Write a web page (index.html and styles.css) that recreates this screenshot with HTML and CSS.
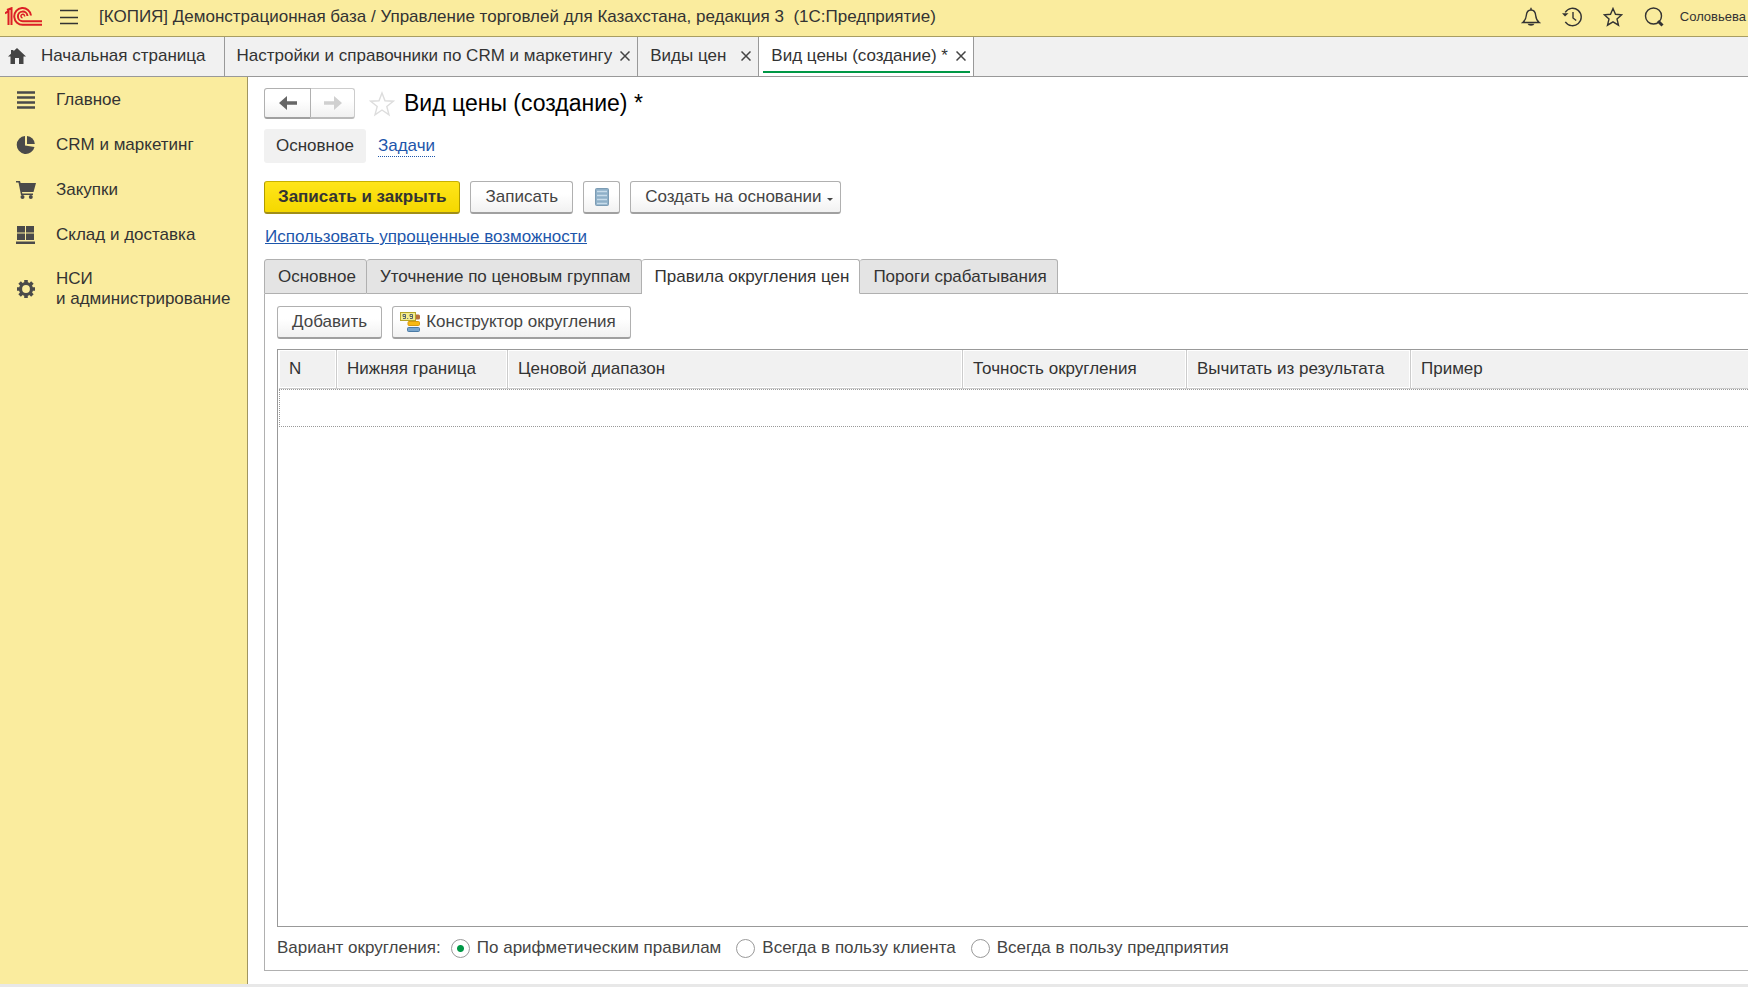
FILE: index.html
```html
<!DOCTYPE html>
<html lang="ru">
<head>
	<meta charset="UTF-8">
	<title>Вид цены (создание) *</title>
	<link rel="stylesheet" href="styles.css">
</head>
<body>
	<header class="top">
		<svg class="logo" width="38" height="20" viewBox="0 0 38 20" fill="none" stroke="#dc1f26" stroke-width="2">
			<path d="M0 6.500L3.500 4V18M2 3L6.500 1.200V18"/>
			<path d="M26 8.500A8.400 8.400 0 1 0 18 17.800H37"/>
			<path d="M22.500 9A4.800 4.800 0 1 0 18 14.200H37"/>
			<path d="M19.500 9.500A1.800 1.800 0 1 0 17.500 10.800" stroke-width="1.500"/>
		</svg>
		<button class="icon menu" aria-label="Меню">
			<svg width="18" height="16" viewBox="0 0 18 16" stroke="#333" stroke-width="1.300"><path d="M0 1.500H18M0 8.500H18M0 14.500H18"/></svg>
		</button>
		<span class="caption">[КОПИЯ] Демонстрационная база / Управление торговлей для Казахстана, редакция 3&nbsp; (1С:Предприятие)</span>
		<div class="tools">
			<button class="icon" aria-label="Уведомления">
				<svg width="20" height="20" viewBox="0 0 20 20" fill="none" stroke="#333" stroke-width="1.400"><path d="M1.800 15.500C4.500 13.500 5 11.500 5.300 8.500C5.600 4.800 7.200 3 10 3S14.400 4.800 14.700 8.500C15 11.500 15.500 13.500 18.200 15.500Z"/><path d="M10 3V.8"/><path d="M6.500 16.800A3.600 2.600 0 0 0 13.500 16.800Z" fill="#333" stroke="none"/></svg>
			</button>
			<button class="icon" aria-label="История">
				<svg width="20" height="20" viewBox="0 0 20 20" fill="none" stroke="#333" stroke-width="1.400"><path d="M3.200 5.300A8.700 8.700 0 1 1 3.300 14.800"/><path d="M11 5V11L14.200 13.500"/><path d="M0 6.200H6.500L3 9.500Z" fill="#333" stroke="none"/></svg>
			</button>
			<button class="icon" aria-label="Избранное">
				<svg width="20" height="20" viewBox="0 0 20 20" fill="none" stroke="#333" stroke-width="1.400"><path d="M10 1.500L12.500 7.300L18.700 7.800L14 11.900L15.500 18.200L10 14.900L4.500 18.200L6 11.900L1.300 7.800L7.500 7.300Z"/></svg>
			</button>
			<button class="icon" aria-label="Поиск">
				<svg width="20" height="20" viewBox="0 0 20 20" fill="none" stroke="#333"><circle cx="9.500" cy="9" r="8" stroke-width="1.400"/><path d="M14 14L18.500 18.500" stroke-width="3"/></svg>
			</button>
			<a class="user" href="#">Соловьева</a>
		</div>
	</header>

	<nav class="windows">
		<a class="win home" href="#">
			<svg width="18" height="16" viewBox="0 0 18 16" fill="#444"><path d="M9 0L18 8.500H15.500V16H11V10H7V16H2.500V8.500H0L3 5.700V2H5.500V3.300Z"/></svg>
			Начальная страница
		</a>
		<div class="win"><a href="#">Настройки и справочники по CRM и маркетингу</a><button class="close" aria-label="Закрыть"><svg width="10" height="10" viewBox="0 0 10 10"><path d="M.5 .5L9.500 9.500M9.500 .5L.5 9.500"/></svg></button></div>
		<div class="win wide"><a href="#">Виды цен</a><button class="close" aria-label="Закрыть"><svg width="10" height="10" viewBox="0 0 10 10"><path d="M.5 .5L9.500 9.500M9.500 .5L.5 9.500"/></svg></button></div>
		<div class="win on"><a href="#">Вид цены (создание) *</a><button class="close" aria-label="Закрыть"><svg width="10" height="10" viewBox="0 0 10 10"><path d="M.5 .5L9.500 9.500M9.500 .5L.5 9.500"/></svg></button></div>
	</nav>

	<div class="page">
		<nav class="side">
			<a href="#">
				<svg width="20" height="18" viewBox="0 0 20 18" stroke="#4a4a4a" stroke-width="2.500"><path d="M1 1.500H19M1 6.500H19M1 11.500H19M1 16.500H19"/></svg>
				Главное
			</a>
			<a href="#">
				<svg width="20" height="18" viewBox="0 0 20 18" fill="#4a4a4a"><path d="M9 0V9.500L18.500 11A9 9 0 1 1 9 0Z"/><path d="M11 0A8.500 8.500 0 0 1 18.800 8H11Z"/></svg>
				CRM и маркетинг
			</a>
			<a href="#">
				<svg width="20" height="18" viewBox="0 0 20 18" fill="#4a4a4a"><path d="M0 0H4L4.600 2H20L17.500 11H6L6.300 12.500H17V14H5L2.500 1.500H0Z"/><circle cx="6.500" cy="16" r="2"/><circle cx="14.800" cy="16" r="2"/></svg>
				Закупки
			</a>
			<a href="#">
				<svg width="20" height="18" viewBox="0 0 20 18" fill="#4a4a4a"><path d="M1 0H9V6.500H1ZM10 0H18V6.500H10ZM1 7.500H9V14H1ZM10 7.500H18V14H10ZM0 15.500H19V18H0Z"/></svg>
				Склад и доставка
			</a>
			<a href="#">
				<svg width="20" height="18" viewBox="0 0 20 18" fill="none" stroke="#4a4a4a"><circle cx="10" cy="9" r="5.500" stroke-width="3.200"/><path d="M10 0V3M10 15V18M1 9H4M16 9H19M3.600 2.600L5.800 4.800M14.200 13.200L16.400 15.400M3.600 15.400L5.800 13.200M14.200 4.800L16.400 2.600" stroke-width="3.600"/></svg>
				<span>НСИ<br>и администрирование</span>
			</a>
		</nav>

		<main class="form">
			<div class="head">
				<div class="history">
					<button class="btn" aria-label="Назад"><svg width="18" height="14" viewBox="0 0 18 14" fill="#666"><path d="M0 7L8 0V5.300H18V8.700H8V14Z"/></svg></button>
					<button class="btn" aria-label="Вперед" disabled><svg width="18" height="14" viewBox="0 0 18 14" fill="#d0d0d0"><path d="M18 7L10 0V5.300H0V8.700H10V14Z"/></svg></button>
				</div>
				<svg class="fav" width="26" height="26" viewBox="0 0 26 26" fill="none" stroke="#ddd" stroke-width="1.400"><path d="M13 2L16 9.800L24.300 10.200L17.800 15.400L20 23.800L13 19L6 23.800L8.200 15.400L1.700 10.200L10 9.800Z"/></svg>
				<h1>Вид цены (создание) *</h1>
			</div>

			<nav class="sections">
				<a class="on" href="#">Основное</a>
				<a class="task" href="#">Задачи</a>
			</nav>

			<div class="bar">
				<button class="btn main">Записать и закрыть</button>
				<button class="btn">Записать</button>
				<button class="btn list" aria-label="Список">
					<svg width="14" height="18" viewBox="0 0 14 18"><rect x=".5" y=".5" width="13" height="17" rx="1" fill="#8fb0c8" stroke="#7c9cb4"/><path d="M2 3.500H12M2 7.500H12M2 11.500H12M2 15.500H12" stroke="#c8dcea" stroke-width="1.500"/></svg>
				</button>
				<button class="btn drop">Создать на основании<i class="arrow"></i></button>
			</div>

			<a class="simple" href="#">Использовать упрощенные возможности</a>

			<div class="tabs">
				<button>Основное</button>
				<button>Уточнение по ценовым группам</button>
				<button class="on">Правила округления цен</button>
				<button>Пороги срабатывания</button>
			</div>

			<section class="panel">
				<div class="bar">
					<button class="btn">Добавить</button>
					<button class="btn builder">
						<svg width="20" height="20" viewBox="0 0 20 20">
							<rect x="12" y="2.500" width="8" height="5" rx="1.500" fill="#b8703c"/>
							<rect x="8" y="9.500" width="11.500" height="4" rx="1" fill="#f8b912" stroke="#d99a0c"/>
							<rect x="7.500" y="15.500" width="12" height="4" rx="1" fill="#78a5cc" stroke="#4b7ba6"/>
							<rect x=".5" y=".5" width="15" height="8" fill="#f5ec8c" stroke="#b5a52a"/>
							<path d="M5.500 4.500H3V2.500H5.500V6.500H3M12.500 4.500H10V2.500H12.500V6.500H10M7.200 6.500H8.200" fill="none" stroke="#55636e"/>
						</svg>
						Конструктор округления
					</button>
				</div>

				<div class="grid">
					<table>
						<thead>
							<tr>
								<th class="c-num">N</th>
								<th class="c-low">Нижняя граница</th>
								<th class="c-range">Ценовой диапазон</th>
								<th class="c-calc">Точность округления</th>
								<th class="c-calc">Вычитать из результата</th>
								<th>Пример</th>
							</tr>
						</thead>
						<tbody>
							<tr><td colspan="6"></td></tr>
						</tbody>
					</table>
				</div>

				<div class="round" role="radiogroup" aria-labelledby="round">
					<span id="round">Вариант округления:</span>
					<label><input type="radio" name="round" checked>По арифметическим правилам</label>
					<label><input type="radio" name="round">Всегда в пользу клиента</label>
					<label><input type="radio" name="round">Всегда в пользу предприятия</label>
				</div>
			</section>
		</main>
	</div>
</body>
</html>
```

FILE: styles.css
```css
* {
	margin: 0;
	padding: 0;
	box-sizing: border-box;
}
body {
	display: flex;
	flex-direction: column;
	min-height: 100vh;
	border-bottom: 3px solid #e8e8e8;
	font: 17px/20px "Liberation Sans", Arial, sans-serif;
	color: #333;
	background: #fff;
	overflow-x: hidden;
}
button {
	font: inherit;
	color: inherit;
	border: none;
	background: none;
	cursor: pointer;
}
a {
	color: inherit;
	text-decoration: none;
}
svg {
	display: block;
	flex: none;
}

/* шапка */
.top {
	display: flex;
	align-items: center;
	height: 37px;
	padding: 0 2px 3px 5px;
	border-bottom: 1px solid #a89d62;
	background: #faec9e;
	white-space: nowrap;
}
.menu {
	margin: 0 21px 0 17px;
}
.tools {
	display: flex;
	align-items: center;
	gap: 21px;
	margin-left: auto;
}
.user {
	margin-left: -5px;
	font-size: 13px;
}

/* открытые окна */
.windows {
	display: flex;
	height: 40px;
	border-bottom: 1px solid #999;
	background: #f1f1f1;
	white-space: nowrap;
}
.win {
	display: flex;
	align-items: center;
	gap: 8px;
	padding: 0 7px 2px 12px;
	border-right: 1px solid #999;
}
.home {
	gap: 15px;
	padding: 0 18px 2px 8px;
}
.wide {
	gap: 15px;
}
.win.on {
	position: relative;
	background: #fff;
}
.win.on::after {
	content: "";
	position: absolute;
	left: 4px;
	right: 3px;
	bottom: 3px;
	height: 2px;
	background: #009846;
}
.close path {
	stroke: #444;
	stroke-width: 1.5;
}

.page {
	flex: 1;
	display: flex;
}
.side {
	flex: none;
	width: 248px;
	padding-top: 10px;
	border-right: 1px solid #a09560;
	background: #faec9e;
}
.side a {
	display: flex;
	align-items: center;
	gap: 20px;
	min-height: 25px;
	margin-bottom: 20px;
	padding-left: 16px;
}
.side span {
	padding: 2px 0;
}

/* форма */
.form {
	flex: 1;
	display: flex;
	flex-direction: column;
	min-width: 0;
	padding: 11px 0 13px 16px;
}
.head {
	display: flex;
	align-items: center;
	height: 31px;
}
.head h1 {
	padding-bottom: 2px;
	font-size: 23px;
	line-height: 26px;
	font-weight: normal;
	color: #000;
}
.fav {
	margin: 0 9px 0 14px;
}
.history {
	display: flex;
}
.history .btn {
	width: 47px;
	height: 31px;
	padding: 0;
}
.history .btn:first-child {
	border-radius: 3px 0 0 3px;
}
.history .btn:last-child {
	width: 44px;
	border-color: #ccc #ccc #bbb;
	border-left: none;
	border-radius: 0 3px 3px 0;
}
.btn {
	display: flex;
	align-items: center;
	justify-content: center;
	height: 33px;
	padding: 0 14px;
	border: 1px solid #b0b0b0;
	border-bottom: 2px solid #a0a0a0;
	border-radius: 3px;
	color: #444;
	background: linear-gradient(#fff 40%, #f1f1f1);
	white-space: nowrap;
}
.btn.main {
	padding: 0 13px;
	border-color: #c8b100 #b09c00 #a08e18;
	font-weight: bold;
	color: #333;
	background: linear-gradient(#ffe51a, #f5d800);
}
.btn.list {
	width: 37px;
	padding: 0;
}
.btn.drop {
	padding-right: 7px;
}
.arrow {
	margin: 4px 0 0 5px;
	border: 3px solid transparent;
	border-top-color: #444;
	border-bottom: none;
}
.sections {
	display: flex;
	align-items: center;
	gap: 12px;
	margin: 10px 0 18px;
}
.sections .on {
	padding: 7px 12px;
	border-radius: 3px;
	background: #f1f1f1;
}
.task {
	border-bottom: 1px dotted #1d56ab;
	color: #1d56ab;
}
.bar {
	display: flex;
	gap: 10px;
}
.simple {
	align-self: flex-start;
	margin: 13px 0 12px 1px;
	color: #1d56ab;
	text-decoration: underline;
}

/* вкладки */
.tabs {
	display: flex;
}
.tabs button {
	height: 35px;
	padding: 0 10px 0 13px;
	border: 1px solid #b0b0b0;
	border-left: none;
	border-radius: 3px 3px 0 0;
	background: #e4e4e4;
	white-space: nowrap;
}
.tabs button:first-child {
	border-left: 1px solid #b0b0b0;
}
.tabs .on {
	border-bottom-color: #fff;
	background: #fff;
}
.tabs::after {
	content: "";
	flex: 1;
	border-bottom: 1px solid #b0b0b0;
}
.panel {
	flex: 1;
	display: flex;
	flex-direction: column;
	padding: 12px 0 12px 12px;
	border-left: 1px solid #b0b0b0;
	border-bottom: 1px solid #b0b0b0;
}
.btn.builder {
	gap: 6px;
	padding-left: 7px;
}
.grid {
	flex: 1;
	margin: 10px 0 11px;
	padding-left: 1px;
	border: 1px solid #999;
	border-right: none;
}
.grid table {
	width: 100%;
	table-layout: fixed;
	border-collapse: separate;
	border-spacing: 0;
}
.grid th {
	height: 39px;
	padding: 0 10px;
	border-right: 1px solid #ccc;
	border-bottom: 1px solid #ccc;
	box-shadow: inset 0 0 0 1px #fff;
	font-weight: normal;
	text-align: left;
	white-space: nowrap;
	background: #f1f1f1;
}
.grid th:last-child {
	border-right: none;
	box-shadow: inset 1px 1px 0 #fff;
}
.c-num {
	width: 58px;
}
.c-low {
	width: 171px;
}
.c-range {
	width: 455px;
}
.c-calc {
	width: 224px;
}
.grid td {
	height: 38px;
	border: 1px dotted #999;
	border-right: none;
}
.round {
	display: flex;
	align-items: center;
	gap: 15px;
	height: 20px;
	color: #444;
}
.round span {
	margin-right: -5px;
}
.round label {
	display: flex;
	align-items: center;
	gap: 7px;
}
.round input {
	appearance: none;
	width: 19px;
	height: 19px;
	border: 1px solid #999;
	border-radius: 50%;
	background: #fff;
}
.round input:checked {
	background: radial-gradient(circle, #009846 3px, #fff 4px);
}
```
